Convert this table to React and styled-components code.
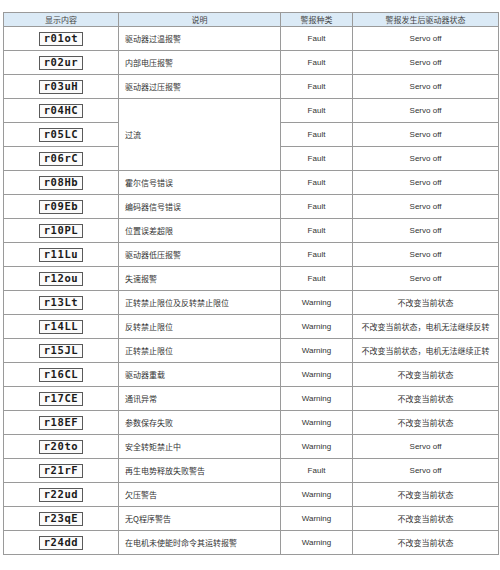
import React from 'react';
import styled, { createGlobalStyle } from 'styled-components';

const GlobalStyle = createGlobalStyle`
  body {
    margin: 0;
    background: #fff;
  }
`;

const Page = styled.div`
  width: 500px;
  height: 570px;
  padding: 12px 2px 0 3px;
  box-sizing: border-box;
  background: #fff;
`;

const Table = styled.table`
  width: 495px;
  border-collapse: collapse;
  table-layout: fixed;
  border: 1px solid #8c8c8c;
  font-family: 'Liberation Sans', 'Noto Sans CJK SC', sans-serif;
  font-size: 8px;
  color: #333;
`;

const HeadCell = styled.th`
  height: 13px;
  padding: 0;
  background: #dbeaf6;
  border: 1px solid #9a9a9a;
  font-weight: normal;
  text-align: center;
  color: #444;
  font-family: 'Noto Sans CJK SC', sans-serif;
  line-height: 1;
`;

const Cell = styled.td`
  height: 23px;
  padding: 0 ${(p) => (p.$left ? '6px' : '0')};
  border: 1px solid #9a9a9a;
  text-align: ${(p) => (p.$left ? 'left' : 'center')};
  vertical-align: middle;
  font-family: ${(p) =>
    p.$cjk ? "'Noto Sans CJK SC', sans-serif" : "'Liberation Sans', 'Noto Sans CJK SC', sans-serif"};
  line-height: 1;
  white-space: nowrap;
`;

const Code = styled.span`
  display: inline-flex;
  align-items: center;
  justify-content: center;
  width: 44px;
  height: 14px;
  box-sizing: border-box;
  border: 1px solid #5a5a5a;
  background: #fbfbfb;
  font-family: 'DejaVu Sans Mono', monospace;
  font-weight: bold;
  font-size: 10.5px;
  letter-spacing: 0.6px;
  color: #1a1a1a;
  line-height: 1;
`;

const rows = [
  { code: 'r01ot', desc: '驱动器过温报警', kind: 'Fault', state: 'Servo off' },
  { code: 'r02ur', desc: '内部电压报警', kind: 'Fault', state: 'Servo off' },
  { code: 'r03uH', desc: '驱动器过压报警', kind: 'Fault', state: 'Servo off' },
  { code: 'r04HC', desc: '过流', span: 3, kind: 'Fault', state: 'Servo off' },
  { code: 'r05LC', kind: 'Fault', state: 'Servo off' },
  { code: 'r06rC', kind: 'Fault', state: 'Servo off' },
  { code: 'r08Hb', desc: '霍尔信号错误', kind: 'Fault', state: 'Servo off' },
  { code: 'r09Eb', desc: '编码器信号错误', kind: 'Fault', state: 'Servo off' },
  { code: 'r10PL', desc: '位置误差超限', kind: 'Fault', state: 'Servo off' },
  { code: 'r11Lu', desc: '驱动器低压报警', kind: 'Fault', state: 'Servo off' },
  { code: 'r12ou', desc: '失速报警', kind: 'Fault', state: 'Servo off' },
  { code: 'r13Lt', desc: '正转禁止限位及反转禁止限位', kind: 'Warning', state: '不改变当前状态' },
  { code: 'r14LL', desc: '反转禁止限位', kind: 'Warning', state: '不改变当前状态，电机无法继续反转' },
  { code: 'r15JL', desc: '正转禁止限位', kind: 'Warning', state: '不改变当前状态，电机无法继续正转' },
  { code: 'r16CL', desc: '驱动器重载', kind: 'Warning', state: '不改变当前状态' },
  { code: 'r17CE', desc: '通讯异常', kind: 'Warning', state: '不改变当前状态' },
  { code: 'r18EF', desc: '参数保存失败', kind: 'Warning', state: '不改变当前状态' },
  { code: 'r20to', desc: '安全转矩禁止中', kind: 'Warning', state: 'Servo off' },
  { code: 'r21rF', desc: '再生电势释放失败警告', kind: 'Fault', state: 'Servo off' },
  { code: 'r22ud', desc: '欠压警告', kind: 'Warning', state: '不改变当前状态' },
  { code: 'r23qE', desc: '无Q程序警告', kind: 'Warning', state: '不改变当前状态' },
  { code: 'r24dd', desc: '在电机未使能时命令其运转报警', kind: 'Warning', state: '不改变当前状态' },
];

const isCjk = (s) => /[\u4e00-\u9fff]/.test(s);

export default function App() {
  return (
    <Page>
      <GlobalStyle />
      <Table>
        <colgroup>
          <col style={{ width: 115 }} />
          <col style={{ width: 162 }} />
          <col style={{ width: 72 }} />
          <col style={{ width: 146 }} />
        </colgroup>
        <thead>
          <tr>
            <HeadCell>显示内容</HeadCell>
            <HeadCell>说明</HeadCell>
            <HeadCell>警报种类</HeadCell>
            <HeadCell>警报发生后驱动器状态</HeadCell>
          </tr>
        </thead>
        <tbody>
          {rows.map((r) => (
            <tr key={r.code}>
              <Cell>
                <Code>{r.code}</Code>
              </Cell>
              {r.desc && (
                <Cell $left $cjk rowSpan={r.span || 1}>
                  {r.desc}
                </Cell>
              )}
              <Cell>{r.kind}</Cell>
              <Cell $cjk={isCjk(r.state)}>{r.state}</Cell>
            </tr>
          ))}
        </tbody>
      </Table>
    </Page>
  );
}
